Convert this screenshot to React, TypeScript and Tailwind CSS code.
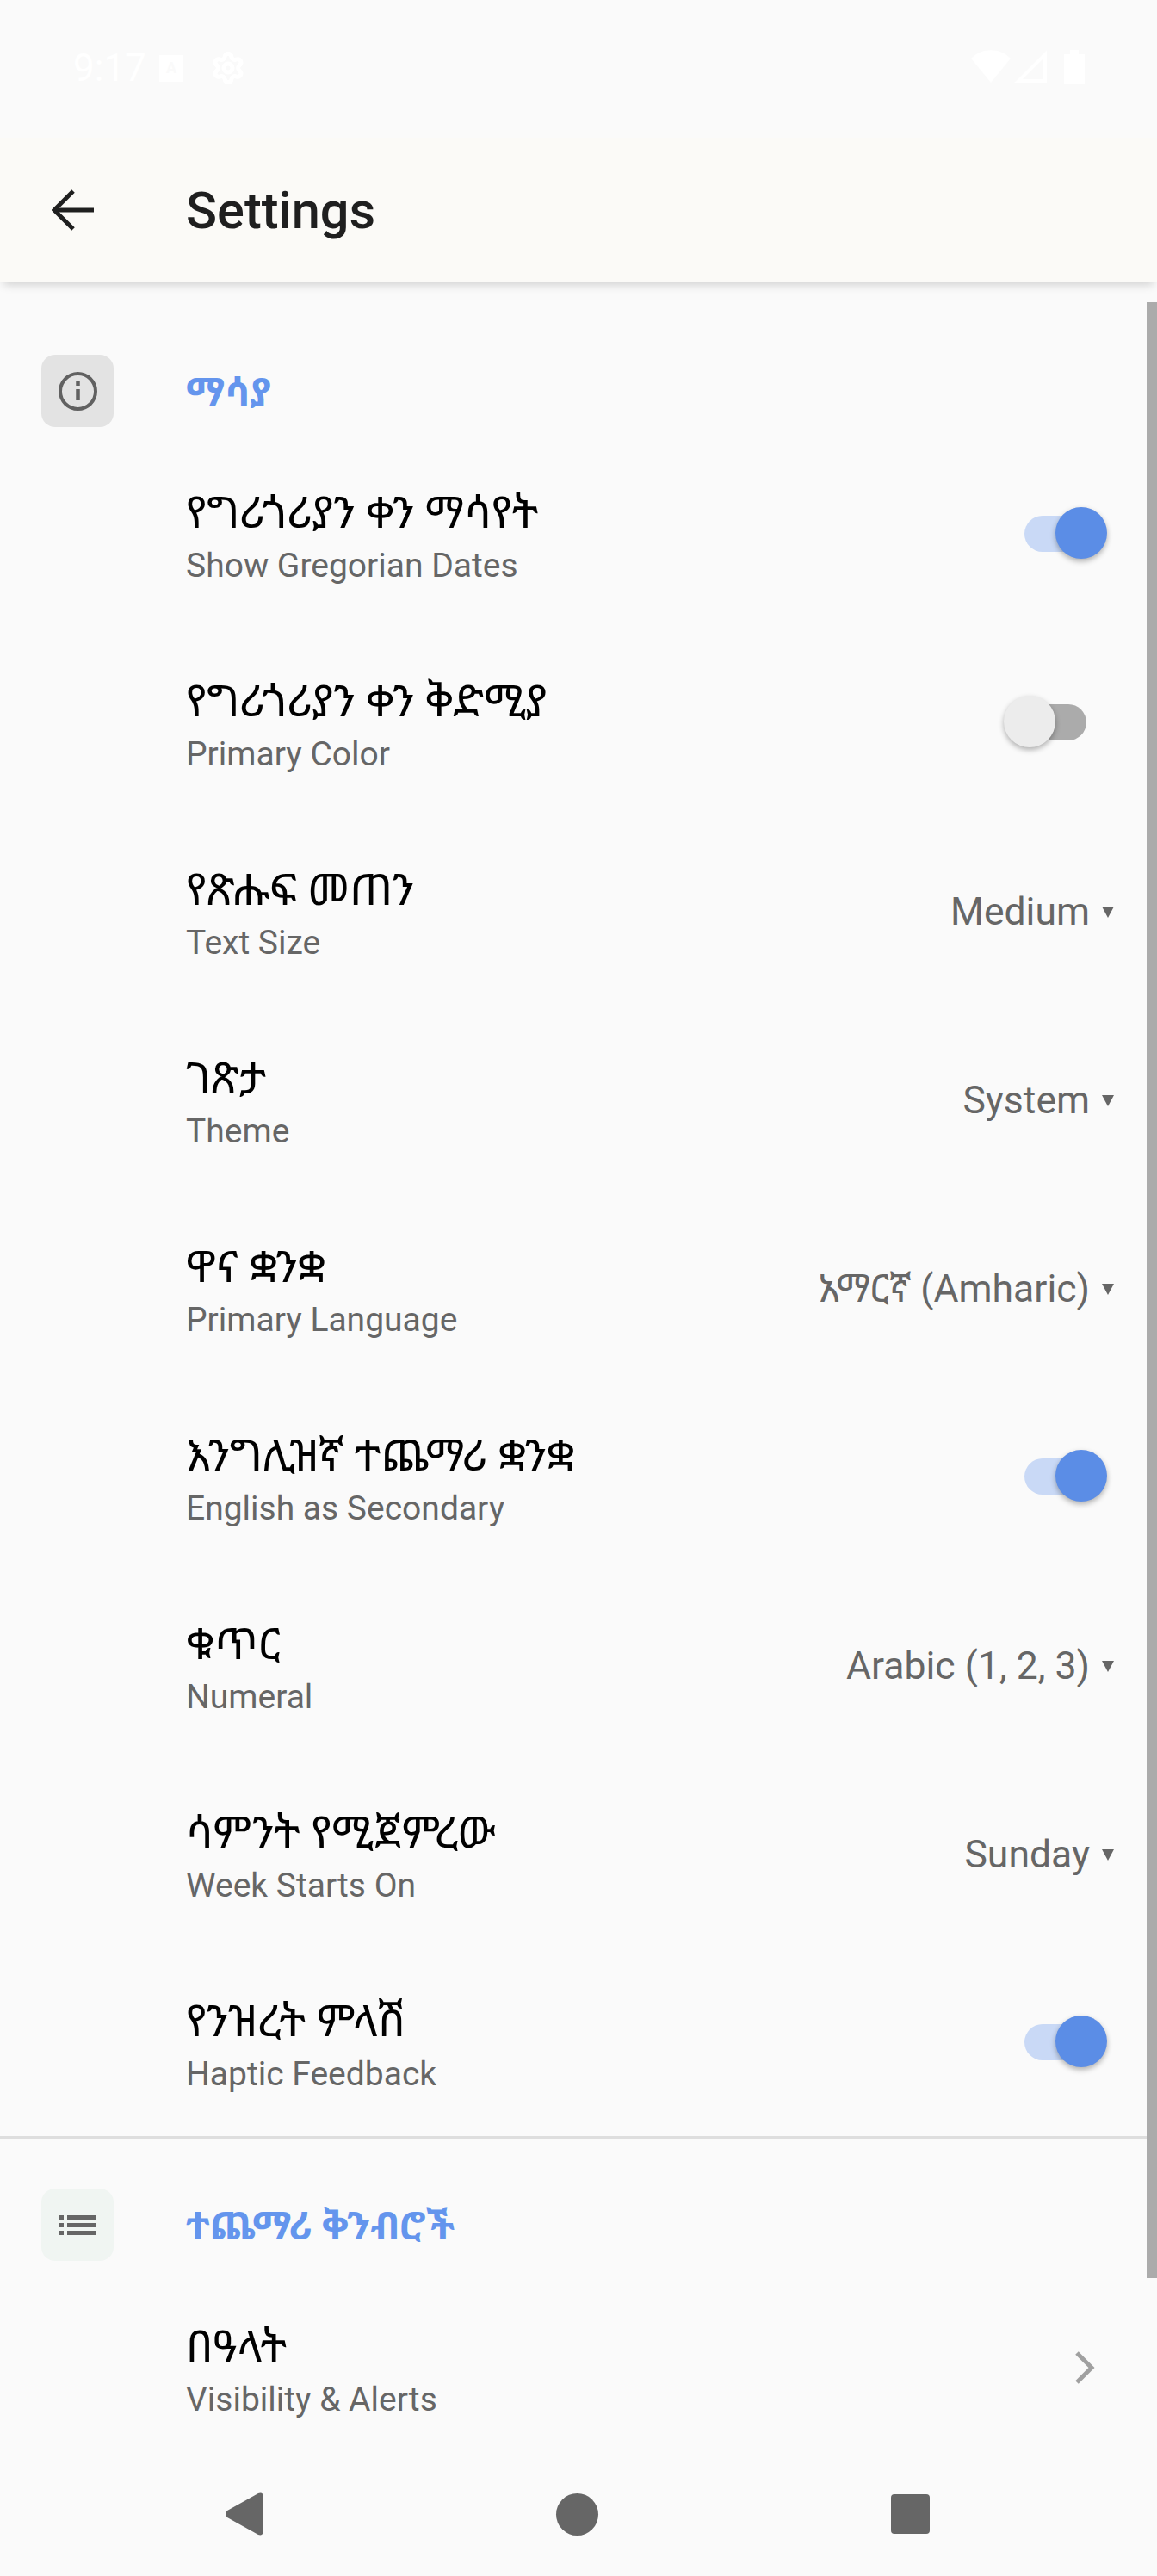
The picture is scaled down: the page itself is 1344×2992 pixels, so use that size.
import React from 'react';
import { Settings } from 'lucide-react';

interface RowProps {
  title: string;
  sub: string;
  children: React.ReactNode;
}

const Row: React.FC<RowProps> = ({ title, sub, children }) => (
  <div className="flex h-[219px] items-center pl-[216px]">
    <div className="flex flex-1 flex-col pt-[13px]">
      <span className="text-[51px] leading-[60px] text-black">{title}</span>
      <span className="mt-[1px] text-[39px] leading-[60px] text-[#666666]">{sub}</span>
    </div>
    {children}
  </div>
);

const Toggle: React.FC<{ on?: boolean }> = ({ on }) =>
  on ? (
    <div className="relative mr-[70px] h-[42px] w-[84px] rounded-full bg-[#c9d9f6]">
      <div className="absolute right-[-12px] top-[-10px] h-[60px] w-[60px] rounded-full bg-[#5b8de6] shadow-[0_3px_6px_rgba(0,0,0,0.3)]" />
    </div>
  ) : (
    <div className="relative mr-[82px] h-[42px] w-[84px] rounded-full bg-[#ababab]">
      <div className="absolute left-[-12px] top-[-10px] h-[60px] w-[60px] rounded-full bg-[#ececec] shadow-[0_3px_6px_rgba(0,0,0,0.3)]" />
    </div>
  );

const Picker: React.FC<{ value: string }> = ({ value }) => (
  <div className="mr-[50px] flex items-center gap-[14px] pt-[3px] text-[#666666]">
    <span className="text-[44.5px] leading-[60px]">{value}</span>
    <span className="h-0 w-0 border-x-[7px] border-t-[13px] border-x-transparent border-t-[#666666]" />
  </div>
);

const SectionHead: React.FC<{ title: string; box: string; children: React.ReactNode }> = ({ title, box, children }) => (
  <div className="flex h-[84px] items-center pl-[48px]">
    <div className={`flex h-[84px] w-[84px] items-center justify-center rounded-[16px] ${box}`}>{children}</div>
    <span className="ml-[84px] pt-[3px] text-[45px] font-bold leading-[60px] text-[#6495ed]">{title}</span>
  </div>
);

export default function App() {
  return (
    <div
      className="relative flex h-[2992px] w-[1344px] flex-col overflow-hidden bg-[#fafafa]"
      style={{ fontFamily: 'Roboto, "Noto Sans", "Noto Sans Ethiopic", "DejaVu Sans", sans-serif' }}
    >
      {/* status bar, almost invisible on this theme */}
      <div className="flex h-[160px] shrink-0 items-start justify-between pl-[85px] pr-[84px] pt-[58px] text-white">
        <div className="flex h-[42px] items-center">
          <span className="w-[100px] text-[44px] leading-[48px]">9:17</span>
          <div className="flex h-[31px] w-[28px] items-center justify-center bg-white text-[18px] font-bold leading-none text-[#fafafa]">A</div>
          <Settings className="ml-[32px]" size={40} strokeWidth={3} color="#ffffff" />
        </div>
        <div className="flex items-start">
          <svg width="46" height="38" viewBox="0 0 46 38" fill="#ffffff">
            <path d="M0 10 C12 -3 34 -3 46 10 L23 38 Z" />
          </svg>
          <svg className="ml-[4px]" width="38" height="38" viewBox="0 0 38 38" fill="none" stroke="#ffffff" strokeWidth="4">
            <path d="M36 5 V36 H5 Z" />
          </svg>
          <svg className="ml-[20px]" width="24" height="39" viewBox="0 0 24 39" fill="#ffffff">
            <path d="M7 0 H17 V5 H24 V39 H0 V5 H7 Z" />
          </svg>
        </div>
      </div>

      <header className="z-10 flex h-[167px] shrink-0 items-center bg-[#fbfaf7] shadow-[0_8px_10px_-4px_rgba(0,0,0,0.16)]">
        <svg className="ml-[60px]" width="49" height="48" viewBox="0 0 49 48" fill="none" stroke="#1f1f1f" strokeWidth="5">
          <path d="M25 2 L3 24 L25 46 M3 24 H49" />
        </svg>
        <h1 className="ml-[107px] pt-[2px] text-[59.5px] font-medium leading-[72px] text-[#1f1f1f]">Settings</h1>
      </header>

      <main className="relative min-h-0 flex-1 overflow-hidden pt-[85px]">
        <div className="absolute right-0 top-[24px] h-[2295px] w-[12px] bg-[#ababab]" />

        <SectionHead title="ማሳያ" box="bg-[#e3e3e3]">
          <svg width="45" height="45" viewBox="0 0 45 45" fill="none" stroke="#616161">
            <circle cx="22.5" cy="22.5" r="20.5" strokeWidth="4" />
            <path d="M22.5 20 V33" strokeWidth="4.5" />
            <path d="M22.5 11 V16" strokeWidth="4.5" />
          </svg>
        </SectionHead>
        <div className="mt-[14px]">
          <Row title="የግሪጎሪያን ቀን ማሳየት" sub="Show Gregorian Dates"><Toggle on /></Row>
          <Row title="የግሪጎሪያን ቀን ቅድሚያ" sub="Primary Color"><Toggle /></Row>
          <Row title="የጽሑፍ መጠን" sub="Text Size"><Picker value="Medium" /></Row>
          <Row title="ገጽታ" sub="Theme"><Picker value="System" /></Row>
          <Row title="ዋና ቋንቋ" sub="Primary Language"><Picker value="አማርኛ (Amharic)" /></Row>
          <Row title="እንግሊዝኛ ተጨማሪ ቋንቋ" sub="English as Secondary"><Toggle on /></Row>
          <Row title="ቁጥር" sub="Numeral"><Picker value="Arabic (1, 2, 3)" /></Row>
          <Row title="ሳምንት የሚጀምረው" sub="Week Starts On"><Picker value="Sunday" /></Row>
          <Row title="የንዝረት ምላሽ" sub="Haptic Feedback"><Toggle on /></Row>
        </div>
        <div className="h-[3px] bg-[#dedede]" />
        <div className="mt-[58px]">
          <SectionHead title="ተጨማሪ ቅንብሮች" box="bg-[#f0f5f2]">
            <svg width="42" height="24" viewBox="0 0 42 24" fill="#666666">
              <rect x="0" y="1" width="5" height="5" />
              <rect x="9" y="1" width="33" height="5" />
              <rect x="0" y="10" width="5" height="5" />
              <rect x="9" y="10" width="33" height="5" />
              <rect x="0" y="19" width="5" height="5" />
              <rect x="9" y="19" width="33" height="5" />
            </svg>
          </SectionHead>
        </div>
        <div className="mt-[14px]">
          <Row title="በዓላት" sub="Visibility & Alerts">
            <svg className="mr-[72px]" width="24" height="38" viewBox="0 0 24 38" fill="none" stroke="#a0a0a0" strokeWidth="5">
              <path d="M3 2 L20 19 L3 36" />
            </svg>
          </Row>
        </div>
      </main>

      <nav className="z-10 flex h-[133px] shrink-0 items-start justify-center bg-[#fafafa] pr-[4px] pt-[36px]">
        <div className="flex h-[50px] w-[387px] items-center justify-center">
          <svg width="45" height="50" viewBox="0 0 45 50" fill="#666666">
            <path d="M39 1 Q45 -1 45 6 V44 Q45 51 39 49 L3 29 Q-1 25 3 21 Z" />
          </svg>
        </div>
        <div className="flex h-[50px] w-[387px] items-center justify-center">
          <div className="h-[49px] w-[49px] rounded-full bg-[#666666]" />
        </div>
        <div className="flex h-[50px] w-[387px] items-center justify-center">
          <div className="h-[46px] w-[45px] rounded-[4px] bg-[#666666]" />
        </div>
      </nav>
    </div>
  );
}
